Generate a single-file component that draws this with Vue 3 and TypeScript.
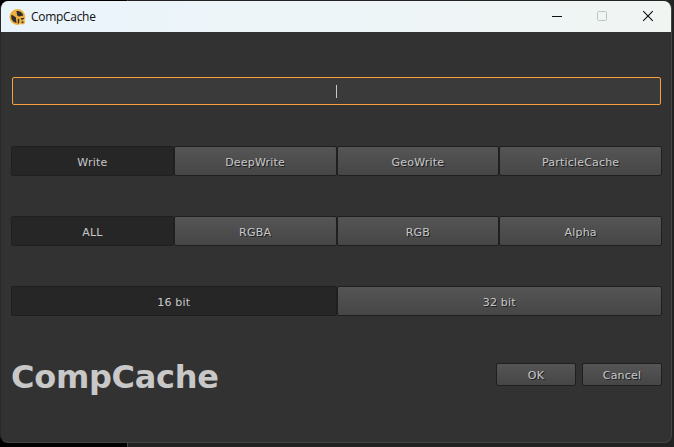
<script setup lang="ts">
import { ref } from 'vue'

interface Group {
  name: string
  options: string[]
}

const groups: Group[] = [
  { name: 'type', options: ['Write', 'DeepWrite', 'GeoWrite', 'ParticleCache'] },
  { name: 'channels', options: ['ALL', 'RGBA', 'RGB', 'Alpha'] },
  { name: 'depth', options: ['16 bit', '32 bit'] },
]
const selected = ref<number[]>([0, 0, 0])
</script>

<template>
  <div class="desktop">
    <div class="window">
      <header class="titlebar">
        <svg class="logo" width="17" height="16" viewBox="0 0 17 16">
          <circle cx="8.4" cy="8" r="7.9" fill="#efb040" />
          <path d="M8.2 6.6 7.4 2A6.2 6.2 0 0 1 14.4 6.6L9.8 7.4Z" fill="#2f2f2e" />
          <path d="M2.6 5.6 6.8 8.2 7.6 14A6.2 6.2 0 0 1 2.6 5.6Z" fill="#2f2f2e" />
          <path d="M8.8 9.6 10.4 10.4 10 14.4H8.8Z" fill="#2f2f2e" />
          <path d="M11.6 9.2 15 8.8 14.6 10.2 12.6 11Z" fill="#2f2f2e" />
          <circle cx="13.6" cy="13.2" r="2.4" fill="#efb040" />
          <circle cx="13.5" cy="13.2" r="1" fill="#3b3529" />
        </svg>
        <span class="caption">CompCache</span>
        <div class="controls">
          <svg width="46" height="31" viewBox="0 0 46 31"><path d="M18 15.5h10" stroke="#111" /></svg>
          <svg width="46" height="31" viewBox="0 0 46 31"><rect x="17.5" y="10.5" width="9" height="9" rx="1" fill="none" stroke="#bec5c1" /></svg>
          <svg width="46" height="31" viewBox="0 0 46 31"><path d="m17.2 10.2 9.6 9.6m0-9.6-9.6 9.6" stroke="#111" stroke-width="1.15" /></svg>
        </div>
      </header>
      <main class="body">
        <div class="field"><span class="caret"></span></div>
        <div v-for="(group, g) in groups" :key="group.name" class="group">
          <button
            v-for="(option, i) in group.options"
            :key="option"
            class="btn"
            :class="{ active: selected[g] === i }"
            @click="selected[g] = i"
          >{{ option }}</button>
        </div>
        <footer class="footer">
          <h1>CompCache</h1>
          <div class="actions">
            <button class="btn action">OK</button>
            <button class="btn action">Cancel</button>
          </div>
        </footer>
      </main>
    </div>
  </div>
</template>

<style>
body {
  margin: 0;
  overflow: hidden;
}
</style>

<style scoped>
.desktop {
  box-sizing: border-box;
  width: 674px;
  height: 447px;
  padding: 1px 2px 4px 0;
  background: linear-gradient(90deg, #000 127px, #444 127px, #444 128px, #222 128px);
  font-family: Verdana, "DejaVu Sans", sans-serif;
}
.window {
  box-sizing: border-box;
  width: 672px;
  height: 442px;
  border: 1px solid #444;
  border-top-width: 0;
  border-left-color: #292929;
  border-radius: 8px;
  background: #323232;
  overflow: hidden;
}
.titlebar {
  display: flex;
  align-items: center;
  height: 31px;
  padding-left: 8px;
  background: linear-gradient(90deg, #eaf4fb, #eef5f8 50%, #f0f5f2);
}
.logo {
  display: block;
  flex: none;
}
.caption {
  margin-left: 5px;
  font: 12px/16px "Segoe UI", "Open Sans", sans-serif;
  letter-spacing: -0.3px;
  color: #111;
}
.controls {
  display: flex;
  margin: 0 -1px 0 auto;
}
.controls svg {
  display: block;
}
.body {
  padding: 45px 9px 0 10px;
}
.field {
  box-sizing: border-box;
  display: flex;
  align-items: center;
  justify-content: center;
  height: 28px;
  margin: 0 1px 41px;
  border: 1px solid #f9a03c;
  border-radius: 2px;
  background: #3a3a3a;
}
.caret {
  width: 1px;
  height: 13px;
  background: #c8c8c8;
}
.group {
  display: flex;
  height: 30px;
  margin-bottom: 40px;
}
.btn {
  box-sizing: border-box;
  flex: 1 1 0;
  min-width: 0;
  margin: 0;
  padding: 3px 0 0;
  border: 1px solid #1f1f1f;
  border-radius: 2px;
  background: linear-gradient(#555, #464646);
  color: #c8c8c8;
  font: 11px/14px Verdana, "DejaVu Sans", sans-serif;
  letter-spacing: 0.2px;
  text-align: center;
  text-shadow: 1px 1px 0 #1c1c1c;
}
.btn.active {
  background: #262626;
  text-shadow: none;
}
.footer {
  display: flex;
  align-items: center;
  justify-content: space-between;
  height: 38px;
  margin-top: -1px;
}
h1 {
  margin: 5px 0 0;
  font-size: 32px;
  line-height: 38px;
  letter-spacing: -0.28px;
  color: #c8c8c8;
}
.actions {
  display: flex;
  gap: 6px;
}
.action {
  flex: none;
  width: 80px;
  height: 23px;
}
</style>
